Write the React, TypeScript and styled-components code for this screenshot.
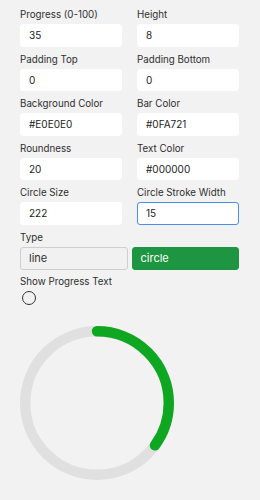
import { useState } from 'react'
import styled, { createGlobalStyle } from 'styled-components'

const GlobalStyle = createGlobalStyle`
  html, body {
    margin: 0;
    padding: 0;
    background: #f2f2f2;
    font-family: Inter, "Noto Sans", sans-serif;
  }
`

const Page = styled.div`
  width: 260px;
  box-sizing: border-box;
  padding: 9px 21px 0 20px;
`

const Grid = styled.div`
  display: grid;
  grid-template-columns: 1fr 1fr;
  column-gap: 15px;
  row-gap: 7px;
`

const Field = styled.div`
  display: flex;
  flex-direction: column;
`

const Label = styled.label`
  font-size: 9.75px;
  line-height: 12px;
  color: #2e2e2e;
  margin-bottom: 3px;
`

const Input = styled.input<{ $focused?: boolean }>`
  box-sizing: border-box;
  height: 22.5px;
  width: 100%;
  padding: 0 8px;
  border: 1px solid ${p => (p.$focused ? '#4a8fe6' : '#fff')};
  border-radius: 3px;
  background: #fff;
  font-family: inherit;
  font-size: 10px;
  color: #222;
  outline: none;
`

const Section = styled.div<{ $gap: number }>`
  display: flex;
  flex-direction: column;
  margin-top: ${p => p.$gap}px;
`

const Toggle = styled.div`
  display: flex;
  gap: 4px;
`

const TypeButton = styled.button<{ $active?: boolean }>`
  flex: 1;
  height: 23px;
  box-sizing: border-box;
  padding: 0 8px;
  text-align: left;
  font-family: inherit;
  font-size: 11px;
  border-radius: 3px;
  border: 1px solid ${p => (p.$active ? '#1e9641' : '#cfcfcf')};
  background: ${p => (p.$active ? '#1e9641' : '#f1f1f1')};
  color: ${p => (p.$active ? '#fff' : '#333')};
`

const Radio = styled.span`
  display: block;
  width: 14px;
  height: 14px;
  box-sizing: border-box;
  margin-left: 2px;
  border: 1.5px solid #333;
  border-radius: 50%;
`

const Chart = styled.svg`
  display: block;
  width: 154px;
  height: 154px;
  margin-top: 21px;
`

const fields = [
  ['Progress (0-100)', '35'],
  ['Height', '8'],
  ['Padding Top', '0'],
  ['Padding Bottom', '0'],
  ['Background Color', '#E0E0E0'],
  ['Bar Color', '#0FA721'],
  ['Roundness', '20'],
  ['Text Color', '#000000'],
  ['Circle Size', '222'],
  ['Circle Stroke Width', '15'],
]

export default function App() {
  const [type, setType] = useState('circle')
  const progress = 35
  const size = 222
  const stroke = 15
  const r = (size - stroke) / 2
  const c = 2 * Math.PI * r

  return (
    <Page>
      <GlobalStyle />
      <Grid>
        {fields.map(([label, value]) => (
          <Field key={label}>
            <Label>{label}</Label>
            <Input defaultValue={value} $focused={label === 'Circle Stroke Width'} />
          </Field>
        ))}
      </Grid>
      <Section $gap={7}>
        <Label>Type</Label>
        <Toggle>
          <TypeButton $active={type === 'line'} onClick={() => setType('line')}>line</TypeButton>
          <TypeButton $active={type === 'circle'} onClick={() => setType('circle')}>circle</TypeButton>
        </Toggle>
      </Section>
      <Section $gap={6}>
        <Label>Show Progress Text</Label>
        <Radio />
      </Section>
      <Chart viewBox={`0 0 ${size} ${size}`}>
        <circle cx={size / 2} cy={size / 2} r={r} fill="none" stroke="#e0e0e0" strokeWidth={stroke} />
        <circle
          cx={size / 2}
          cy={size / 2}
          r={r}
          fill="none"
          stroke="#0fa721"
          strokeWidth={stroke}
          strokeLinecap="round"
          strokeDasharray={c}
          strokeDashoffset={c * (1 - progress / 100)}
          transform={`rotate(-90 ${size / 2} ${size / 2})`}
        />
      </Chart>
    </Page>
  )
}
